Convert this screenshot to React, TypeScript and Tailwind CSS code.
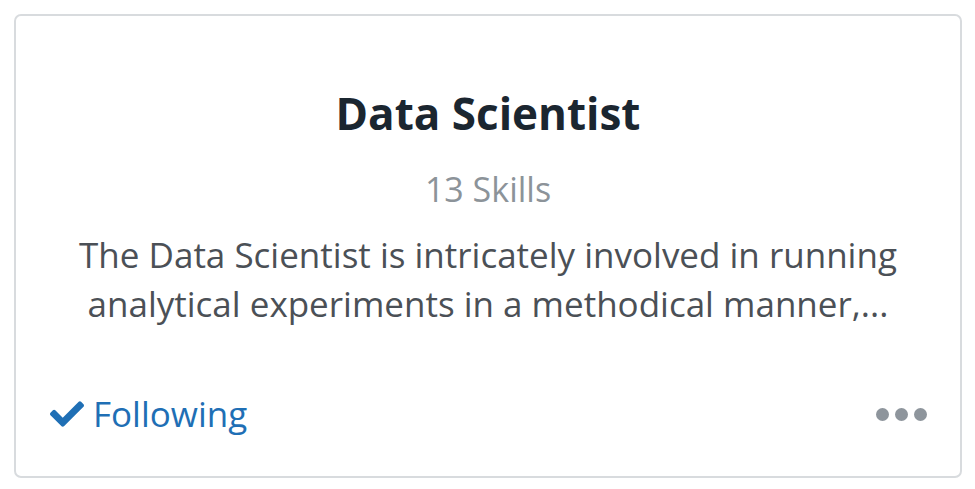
import { FaCheck } from 'react-icons/fa';

const App = () => {
	return (
		<div className="w-[975px] h-[489px] bg-white pt-[14px] pl-[14px]" style={{ fontFamily: '"Open Sans", Lato, sans-serif' }}>
			<div className="w-[948px] h-[464px] border-2 border-[#d8dbde] rounded-[7px] flex flex-col">
				<div className="flex flex-col items-center pt-[69px]">
					<h1 className="text-[44px] leading-[56px] font-bold text-[#1b2630]">Data Scientist</h1>
					<div className="mt-[28px] text-[34px] leading-[40px] text-[#8c9399]">13 Skills</div>
					<p className="mt-[21px] text-[35px] leading-[49px] text-[#4b5056] text-center px-[30px]">
						The Data Scientist is intricately involved in running analytical experiments in a methodical manner,...
					</p>
				</div>
				<div className="mt-auto mb-[42px] flex items-center justify-between pl-[34px] pr-[33px]">
					<div className="flex items-center gap-[9px] text-[#1f6fb5]">
						<FaCheck className="w-[34px] h-[34px]" />
						<span className="text-[35px] leading-[40px]">Following</span>
					</div>
					<div className="flex items-center gap-[6px]">
						<span className="w-[13px] h-[13px] rounded-full bg-[#8e959c]" />
						<span className="w-[13px] h-[13px] rounded-full bg-[#8e959c]" />
						<span className="w-[13px] h-[13px] rounded-full bg-[#8e959c]" />
					</div>
				</div>
			</div>
		</div>
	);
};

export default App;
